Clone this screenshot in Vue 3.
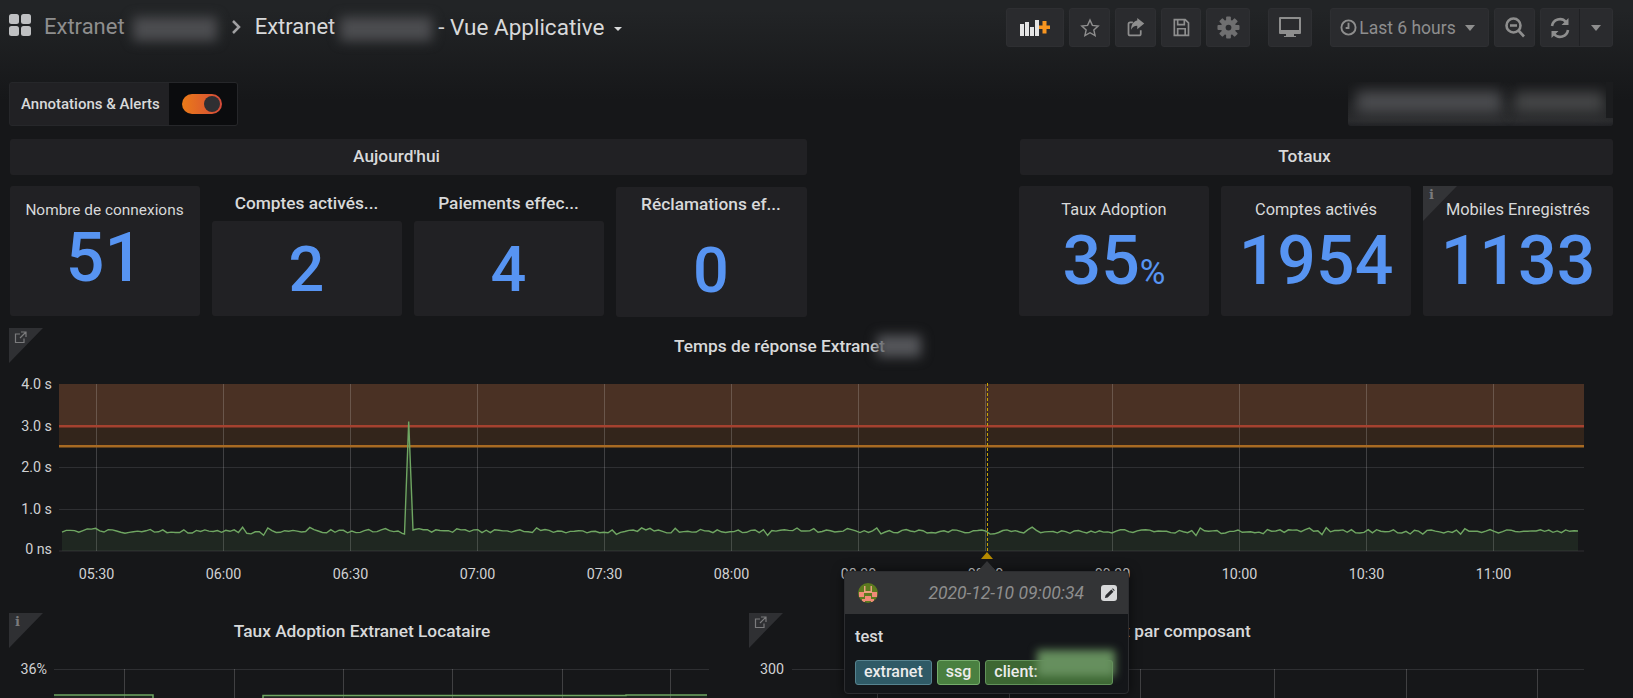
<template>
  <div class="page">
    <header class="navbar">
      <svg class="logo" viewBox="0 0 22 22">
        <rect x="0" y="0" width="10" height="10" rx="2.5" />
        <rect x="12" y="0" width="10" height="10" rx="2.5" />
        <rect x="0" y="12" width="10" height="10" rx="2.5" />
        <rect x="12" y="12" width="10" height="10" rx="2.5" />
      </svg>
      <span class="crumb">Extranet</span>
      <span class="blob crumb-blob"></span>
      <svg class="chevron" viewBox="0 0 10 16"><path d="M2 2l6 6-6 6" /></svg>
      <span class="crumb current">Extranet</span>
      <span class="blob crumb-blob second"></span>
      <span class="crumb current wide">- Vue Applicative</span>
      <span class="title-caret"></span>

      <div class="toolbar">
        <button class="tb w58">
          <svg width="30" height="17" viewBox="0 0 30 17">
            <path fill="#e4e4e4" d="M0 5h4v12H0zM5 3h4v14H5zM10 8h4v9h-4zM15 1h4v16h-4z" />
            <path fill="#f79520" d="M22.500 2h4v4.500H30v3.500h-3.500v4.500h-4V10H19V6.500h3.500z" />
          </svg>
        </button>
        <button class="tb w41">
          <svg width="20" height="20" viewBox="0 0 24 24"><polygon class="ol" points="12,2.5 14.9,8.9 21.8,9.7 16.6,14.3 18.1,21.2 12,17.7 5.9,21.2 7.4,14.3 2.2,9.7 9.1,8.9" /></svg>
        </button>
        <button class="tb w41">
          <svg width="21" height="21" viewBox="0 0 24 24">
            <path class="ol thick" d="M9 6H6a2 2 0 0 0-2 2v11a2 2 0 0 0 2 2h10a2 2 0 0 0 2-2v-4" />
            <path fill="#8e8e8e" d="M14 1l8 6.5-8 6.5v-4c-3.500 0-5.500 1.500-7 4.500 0-6 3-10 7-10.500z" />
          </svg>
        </button>
        <button class="tb w40">
          <svg width="20" height="21" viewBox="0 0 24 24">
            <path class="ol thick" d="M4 2.500h13l4 4v15H4zM8 2.500v6h8v-6M8 21.500v-8h9v8" />
          </svg>
        </button>
        <button class="tb w44">
          <svg width="23" height="23" viewBox="0 0 24 24">
            <rect v-for="a in [0, 45, 90, 135]" :key="a" x="9.500" y="0.500" width="5" height="23" rx="1" fill="#6f6f70" :transform="`rotate(${a} 12 12)`" />
            <circle cx="12" cy="12" r="8" fill="#6f6f70" />
            <circle cx="12" cy="12" r="3" fill="#2a2b2e" />
          </svg>
        </button>
        <button class="tb w44 group-start">
          <svg width="22" height="22" viewBox="0 0 22 22">
            <path fill="#8e8e8e" d="M1 0h20a1 1 0 0 1 1 1v15a1 1 0 0 1-1 1h-6v2h2v1H5v-1h2v-2H1a1 1 0 0 1-1-1V1a1 1 0 0 1 1-1zm1 2v11h18V2z" />
          </svg>
        </button>
        <button class="tb w159 group-start">
          <svg width="17" height="17" viewBox="0 0 18 18">
            <circle class="ol thick" cx="9" cy="9" r="7.500" />
            <path class="ol thick" d="M9 4v5.500H6" />
          </svg>
          <span class="tb-text">Last 6 hours</span>
          <span class="caret"></span>
        </button>
        <button class="tb w41">
          <svg width="20" height="21" viewBox="0 0 20 21">
            <circle class="ol heavy" cx="8.500" cy="8.500" r="7" />
            <path class="ol heavy" d="M5 8.500h7M13.500 13.500l5.500 6" />
          </svg>
        </button>
        <div class="tb split">
          <span class="split-l">
            <svg width="20" height="22" viewBox="0 0 20 22">
              <path class="ol heavy" d="M2 9a8 8 0 0 1 14-4M18 13a8 8 0 0 1-14 4" />
              <path fill="#8e8e8e" d="M18.500 1v7h-7zM1.500 21v-7h7z" />
            </svg>
          </span>
          <span class="split-r"><span class="caret"></span></span>
        </div>
      </div>
    </header>

    <section class="anno-row">
      <div class="anno">
        <span class="anno-label">Annotations &amp; Alerts</span>
        <span class="anno-switch"><span class="toggle"><span class="knob"></span></span></span>
      </div>
      <div class="linkbox">
        <span class="blob link-a"></span>
        <span class="blob link-b"></span>
        <span class="link-edge"></span>
      </div>
    </section>

    <section class="cols">
      <div class="col">
        <div class="head">Aujourd'hui</div>
        <div class="tiles today">
          <div v-for="t in today" :key="t.title" class="tile" :class="t.kind">
            <div class="tile-title" :class="t.kind">{{ t.title }}</div>
            <div class="tile-box" :class="t.kind"><span class="value">{{ t.value }}</span></div>
          </div>
        </div>
      </div>
      <div class="col">
        <div class="head">Totaux</div>
        <div class="tiles totals">
          <div v-for="t in totals" :key="t.title" class="tile big">
            <span v-if="t.info" class="corner small"><span class="i">i</span></span>
            <div class="tile-title big">{{ t.title }}</div>
            <div class="tile-box big"><span class="value big">{{ t.value }}<small v-if="t.unit">{{ t.unit }}</small></span></div>
          </div>
        </div>
      </div>
    </section>

    <section class="graph">
      <span class="corner">
        <svg width="13" height="13" viewBox="0 0 13 13"><path d="M10 7.500v4H1.500V3H6M7 1h5v5M12 1L6 7" /></svg>
      </span>
      <div class="graph-title shifted">
        <span>Temps de réponse Extranet</span><span class="blob title-blob"></span>
      </div>
      <svg class="plot" width="1633" height="249" viewBox="0 364 1633 249">
        <rect x="59" y="384" width="1525" height="42" fill="#4a3124" />
        <rect x="59" y="426" width="1525" height="20" fill="#33251b" />
        <line v-for="y in [467.500, 509.500, 551]" :key="y" x1="59" x2="1584" :y1="y" :y2="y" class="grid-h" />
        <line v-for="t in ticks" :key="t.label" :x1="t.x" :x2="t.x" y1="384" y2="551" class="grid-v" />
        <path :d="areaPath" fill="rgba(115,191,105,0.1)" />
        <rect x="59" y="425" width="1525" height="2.500" fill="#a5412f" />
        <rect x="59" y="445" width="1525" height="2.500" fill="#a86a22" />
        <path :d="linePath" fill="none" stroke="#6fa662" stroke-width="1.400" />
        <line x1="987.500" x2="987.500" y1="383" y2="552" stroke="#c9a400" stroke-dasharray="3 2" />
        <text v-for="l in yLabels" :key="l.text" x="52" :y="l.y + 5" text-anchor="end" class="axis">{{ l.text }}</text>
        <text v-for="t in ticks" :key="t.label" :x="t.x" y="579" text-anchor="middle" class="axis">{{ t.label }}</text>
      </svg>
    </section>

    <section class="bottom">
      <div class="mini left">
        <span class="corner"><span class="i">i</span></span>
        <div class="graph-title">Taux Adoption Extranet Locataire</div>
        <svg class="plot" width="706" height="49" viewBox="9 649 706 49">
          <line x1="54" x2="709" y1="669.500" y2="669.500" class="grid-h" />
          <line v-for="x in [124.500, 234.500, 343.500, 452.500, 562.500, 670.500]" :key="x" :x1="x" :x2="x" y1="669" y2="698" class="grid-v" />
          <path d="M54 695H153V698H54zM263 698V695.500H626V695H707V698z" fill="rgba(115,191,105,0.1)" />
          <path d="M54 695H153V698M263 698V695.500H626V695H707" fill="none" stroke="#6fa662" stroke-width="1.500" />
          <text x="47" y="674" text-anchor="end" class="axis">36%</text>
        </svg>
      </div>
      <div class="mini right">
        <span class="corner">
          <svg width="13" height="13" viewBox="0 0 13 13"><path d="M10 7.500v4H1.500V3H6M7 1h5v5M12 1L6 7" /></svg>
        </span>
        <div class="graph-title">Tx par composant</div>
        <svg class="plot" width="864" height="49" viewBox="749 649 864 49">
          <line x1="792" x2="1584" y1="669.500" y2="669.500" class="grid-h" />
          <line v-for="x in [877.500, 1009.500, 1140.500, 1274.500, 1406.500, 1537.500]" :key="x" :x1="x" :x2="x" y1="669" y2="698" class="grid-v" />
          <text x="784" y="674" text-anchor="end" class="axis">300</text>
        </svg>
      </div>
    </section>

    <div class="anno-tip">
      <span class="marker"></span>
      <span class="tip-arrow"></span>
      <div class="tip-head">
        <svg class="avatar" width="20" height="20" viewBox="0 0 20 20">
          <clipPath id="av"><circle cx="10" cy="10" r="10" /></clipPath>
          <g clip-path="url(#av)">
            <rect width="20" height="20" fill="#5c7a1e" />
            <path fill="#f08a78" d="M1 9h5v5H1zM14 9h5v5h-5zM7 13h6v5H7zM4 16h3v3H4zM13 16h3v3h-3z" />
            <path fill="#e8a080" d="M6 3h1.500v5h5V3H14v7H6z" />
          </g>
        </svg>
        <span class="tip-time">2020-12-10 09:00:34</span>
        <span class="tip-edit">
          <svg width="11" height="11" viewBox="0 0 12 12"><path fill="#2a2b2e" d="M1 11l.7-3L8 1.700l2.300 2.300L4 10.300zM8.800 1l.8-.7 2.100 2.100-.7.800z" /></svg>
        </span>
      </div>
      <div class="tip-body">
        <div class="tip-text">test</div>
        <div class="tags">
          <span class="tag teal">extranet</span>
          <span class="tag green">ssg</span>
          <span class="tag moss">client:</span>
        </div>
        <span class="blob tag-blob"></span>
      </div>
    </div>
  </div>
</template>

<script setup>
const today = [
  { title: 'Nombre de connexions', value: '51', kind: 'plain' },
  { title: 'Comptes activés...', value: '2', kind: 'open' },
  { title: 'Paiements effec...', value: '4', kind: 'open' },
  { title: 'Réclamations ef...', value: '0', kind: 'filled' }
]

const totals = [
  { title: 'Taux Adoption', value: '35', unit: '%' },
  { title: 'Comptes activés', value: '1954' },
  { title: 'Mobiles Enregistrés', value: '1133', info: true }
]

const tickNames = ['05:30', '06:00', '06:30', '07:00', '07:30', '08:00', '08:30', '09:00', '09:30', '10:00', '10:30', '11:00']
const ticks = tickNames.map((label, i) => ({ label, x: Math.round(95.8 + i * 127.06) + 0.5 }))

const yLabels = [
  { text: '4.0 s', y: 384 },
  { text: '3.0 s', y: 426 },
  { text: '2.0 s', y: 467 },
  { text: '1.0 s', y: 509 },
  { text: '0 ns', y: 549 }
]

// small seeded generator so the noise stays the same on every run
let seed = 7
const rnd = () => {
  seed = (seed * 16807) % 2147483647
  return seed / 2147483647
}

const points = []
for (let x = 62; x <= 1578; x += 4.2) {
  if (x > 403 && x < 414) continue
  let y = 533 - rnd() * 3.5
  if (rnd() > 0.82) y -= rnd() * 3
  if (rnd() > 0.85) y += rnd() * 3
  points.push([x, y])
  if (x < 403 && x + 4.2 >= 403) {
    points.push([404.5, 534], [408.7, 421.5], [413, 530])
  }
}
points.push([1578, 531])

const linePath = 'M' + points.map((p) => `${p[0].toFixed(1)} ${p[1].toFixed(1)}`).join('L')
const areaPath = `${linePath}L1578 551L62 551Z`
</script>

<style>
html,
body {
  margin: 0;
  background: #161719;
}
</style>

<style scoped>
.page {
  position: relative;
  width: 1633px;
  height: 698px;
  overflow: hidden;
  background: linear-gradient(180deg, #222426 10px, #161719 100px);
  font-family: Roboto, "Liberation Sans", sans-serif;
  color: #d8d9da;
}

.navbar {
  display: flex;
  align-items: flex-start;
  height: 82px;
  padding: 8px 20px 0 9px;
  box-sizing: border-box;
}

.logo {
  width: 22px;
  height: 22px;
  margin: 6px 13px 0 0;
  fill: #bfc0c2;
}

.crumb {
  font-size: 22px;
  line-height: 38px;
  color: #8e8e8e;
  white-space: nowrap;
}

.crumb.current {
  color: #d8d9da;
}

.crumb.wide {
  font-size: 22.500px;
}

.blob {
  display: block;
  background: #4c4d50;
  filter: blur(6px);
}

.crumb-blob {
  width: 84px;
  height: 24px;
  margin: 9px 12px 0 8px;
}

.crumb-blob.second {
  width: 92px;
  margin: 9px 6px 0 5px;
}

.chevron {
  width: 10px;
  height: 16px;
  margin: 11px 14px 0 2px;
  fill: none;
  stroke: #a0a0a2;
  stroke-width: 2.500;
}

.title-caret {
  width: 0;
  height: 0;
  margin: 19px 0 0 10px;
  border: 4px solid transparent;
  border-top: 4px solid #d8d9da;
  border-bottom: 0;
}

.toolbar {
  display: flex;
  gap: 5px;
  margin-left: auto;
}

.tb {
  display: flex;
  align-items: center;
  justify-content: center;
  box-sizing: border-box;
  height: 39px;
  padding: 0;
  background: #2a2b2e;
  border: 1px solid #2e2f32;
  border-radius: 3px;
  font-family: inherit;
}

.w58 { width: 58px; }
.w41 { width: 41px; }
.w40 { width: 40px; }
.w44 { width: 44px; }
.w159 { width: 159px; padding-right: 4px; }
.group-start { margin-left: 13px; }

.ol {
  fill: none;
  stroke: #8e8e8e;
  stroke-width: 1.7;
}

.ol.thick { stroke-width: 2; }
.ol.heavy { stroke-width: 2.600; }

.tb-text {
  margin: 0 9px 0 2px;
  font-size: 17.500px;
  color: #8e8e8e;
}

.caret {
  width: 0;
  height: 0;
  border: 5px solid transparent;
  border-top: 6px solid #8e8e8e;
  border-bottom: 0;
}

.split {
  width: 73px;
}

.split-l {
  display: flex;
  align-items: center;
  justify-content: center;
  width: 38px;
  height: 100%;
  border-right: 1px solid #1f2023;
}

.split-r {
  display: flex;
  align-items: center;
  justify-content: center;
  flex: 1;
}

.anno-row {
  display: flex;
  justify-content: space-between;
  height: 44px;
  margin-bottom: 13px;
  padding: 0 20px 0 9px;
}

.anno {
  display: flex;
  width: 229px;
  background: #212124;
  border: 1px solid #26272a;
  border-radius: 3px;
  box-sizing: border-box;
  overflow: hidden;
}

.anno-label {
  width: 159px;
  padding-left: 11px;
  box-sizing: border-box;
  font-size: 15px;
  font-weight: 500;
  line-height: 42px;
  white-space: nowrap;
}

.anno-switch {
  display: flex;
  align-items: center;
  justify-content: center;
  flex: 1;
  padding-right: 2px;
  background: #0b0c0e;
}

.toggle {
  display: flex;
  justify-content: flex-end;
  width: 40px;
  height: 20px;
  background: linear-gradient(90deg, #eb7b18, #d44a3a);
  border-radius: 10px;
}

.knob {
  width: 16px;
  height: 16px;
  margin: 2px;
  background: #2f2f32;
  border-radius: 50%;
}

.linkbox {
  position: relative;
  width: 265px;
  overflow: hidden;
  background: linear-gradient(180deg, #18191b 35%, #2a2b2d 88%, #212225);
  border-radius: 0 0 3px 3px;
}

.link-a {
  position: absolute;
  left: 8px;
  top: 9px;
  width: 146px;
  height: 22px;
  filter: blur(7px);
}

.link-b {
  position: absolute;
  left: 166px;
  top: 10px;
  width: 90px;
  height: 20px;
  filter: blur(7px);
  background: #474849;
}

.link-edge {
  position: absolute;
  right: 0;
  top: 0;
  width: 7px;
  height: 36px;
  background: #1b1c1e;
}

.cols {
  display: grid;
  grid-template-columns: 798px 594px;
  column-gap: 212px;
  padding-left: 9px;
}

.head {
  height: 36px;
  margin: 0 0 11px 1px;
  padding-right: 24px;
  box-sizing: border-box;
  background: #212124;
  border-radius: 3px;
  font-size: 17.300px;
  font-weight: 500;
  line-height: 34px;
  text-align: center;
}

.tiles {
  display: grid;
  column-gap: 12px;
  height: 130px;
}

.today {
  grid-template-columns: 190px 190px 190px 191px;
  padding-left: 0.500px;
}

.totals {
  grid-template-columns: 190px 190px 190px;
}

.tile {
  position: relative;
  display: flex;
  flex-direction: column;
  height: 130px;
  min-width: 0;
  border-radius: 3px;
}

.tile.plain,
.tile.big {
  background: #212124;
}

.tile.filled {
  background: #212124;
  height: 130px;
  margin-top: 1px;
}

.tile-title {
  height: 48px;
  padding: 0 4px;
  overflow: hidden;
  font-size: 15.400px;
  line-height: 48px;
  text-align: center;
  white-space: nowrap;
}

.tile-title.big {
  font-size: 16.400px;
}

.tile-title.open,
.tile-title.filled {
  height: 35px;
  font-size: 17.300px;
  font-weight: 500;
  line-height: 35px;
}

.tile-box {
  display: flex;
  flex: 1;
  align-items: center;
  justify-content: center;
}

.tile-box.open {
  background: #212124;
  border-radius: 3px;
}

.value {
  font-size: 63px;
  font-weight: 500;
  line-height: 1;
  color: #5794f2;
  padding-top: 2px;
}

.tile-box.plain .value,
.value.big {
  font-size: 68px;
  padding-top: 0;
  padding-bottom: 21px;
}

.tile-box.plain .value {
  padding-bottom: 24px;
}

.value small {
  font-size: 35px;
  font-weight: 400;
}

.corner {
  position: absolute;
  left: 9px;
  top: 0;
  width: 34px;
  height: 35px;
  background: #2f3033;
  clip-path: polygon(0 0, 100% 0, 0 100%);
  color: #7b7b7d;
}

.corner.small {
  left: 0;
  background: #333437;
}

.corner svg {
  position: absolute;
  left: 5px;
  top: 3px;
  fill: none;
  stroke: #7b7b7d;
  stroke-width: 1.200;
}

.i {
  position: absolute;
  left: 6px;
  top: 0;
  font-family: "DejaVu Serif", serif;
  font-size: 13px;
  font-weight: 700;
  line-height: 18px;
}

.graph {
  position: relative;
  height: 285px;
  margin-top: 12px;
}

.graph-title {
  display: flex;
  justify-content: center;
  height: 36px;
  font-size: 17.300px;
  font-weight: 500;
  line-height: 36px;
  white-space: nowrap;
}

.graph-title.shifted {
  padding-right: 56px;
}

.title-blob {
  position: relative;
  width: 44px;
  height: 22px;
  margin: 7px -18px 0 -8px;
  background: #55565a;
}

.plot {
  display: block;
}

.grid-h {
  stroke: #2e2f32;
  stroke-width: 1;
}

.grid-v {
  stroke: rgba(255, 255, 255, 0.18);
  stroke-width: 1;
}

.axis {
  font-family: Roboto, "Liberation Sans", sans-serif;
  font-size: 14.300px;
  fill: #d0d1d3;
}

.bottom {
  display: grid;
  grid-template-columns: 706px 864px;
  column-gap: 34px;
  padding-left: 9px;
}

.mini {
  position: relative;
}

.mini .corner {
  left: 0;
}

.anno-tip {
  position: absolute;
  left: 844px;
  top: 571px;
  width: 285px;
  height: 123px;
  box-sizing: border-box;
  background: #141619;
  border: 1px solid #2c2d30;
  border-radius: 4px;
  box-shadow: 0 0 12px rgba(0, 0, 0, 0.6);
}

.marker {
  position: absolute;
  left: 136px;
  top: -20px;
  width: 0;
  height: 0;
  border: 6px solid transparent;
  border-bottom: 7px solid #b58a00;
  border-top: 0;
}

.tip-arrow {
  position: absolute;
  left: 132px;
  top: -11px;
  width: 0;
  height: 0;
  border: 10px solid transparent;
  border-bottom: 11px solid #333436;
  border-top: 0;
}

.tip-head {
  display: flex;
  align-items: center;
  height: 42px;
  padding: 0 11px 0 13px;
  background: #333436;
  border-radius: 3px 3px 0 0;
}

.tip-time {
  margin-left: auto;
  font-size: 17.500px;
  font-style: italic;
  color: #8e8e8e;
}

.tip-edit {
  display: flex;
  align-items: center;
  justify-content: center;
  width: 16px;
  height: 16px;
  margin-left: 17px;
  background: #d8d9da;
  border-radius: 3px;
}

.tip-body {
  position: relative;
  padding: 12px 10px 0;
}

.tip-text {
  font-size: 16.500px;
  font-weight: 500;
  line-height: 22px;
}

.tags {
  display: flex;
  gap: 5px;
  margin-top: 12px;
}

.tag {
  box-sizing: border-box;
  height: 25px;
  padding: 0 8px;
  border: 1px solid;
  border-radius: 3px;
  font-size: 16px;
  font-weight: 500;
  line-height: 22px;
  color: #ececec;
}

.teal {
  background: #2f5a66;
  border-color: #56838f;
}

.green {
  background: #4a8040;
  border-color: #75ad6b;
}

.moss {
  width: 128px;
  background: #3d6733;
  border-color: #62935a;
}

.tag-blob {
  position: absolute;
  left: 192px;
  top: 36px;
  width: 78px;
  height: 26px;
  background: #668f5e;
  filter: blur(4px);
}
</style>
